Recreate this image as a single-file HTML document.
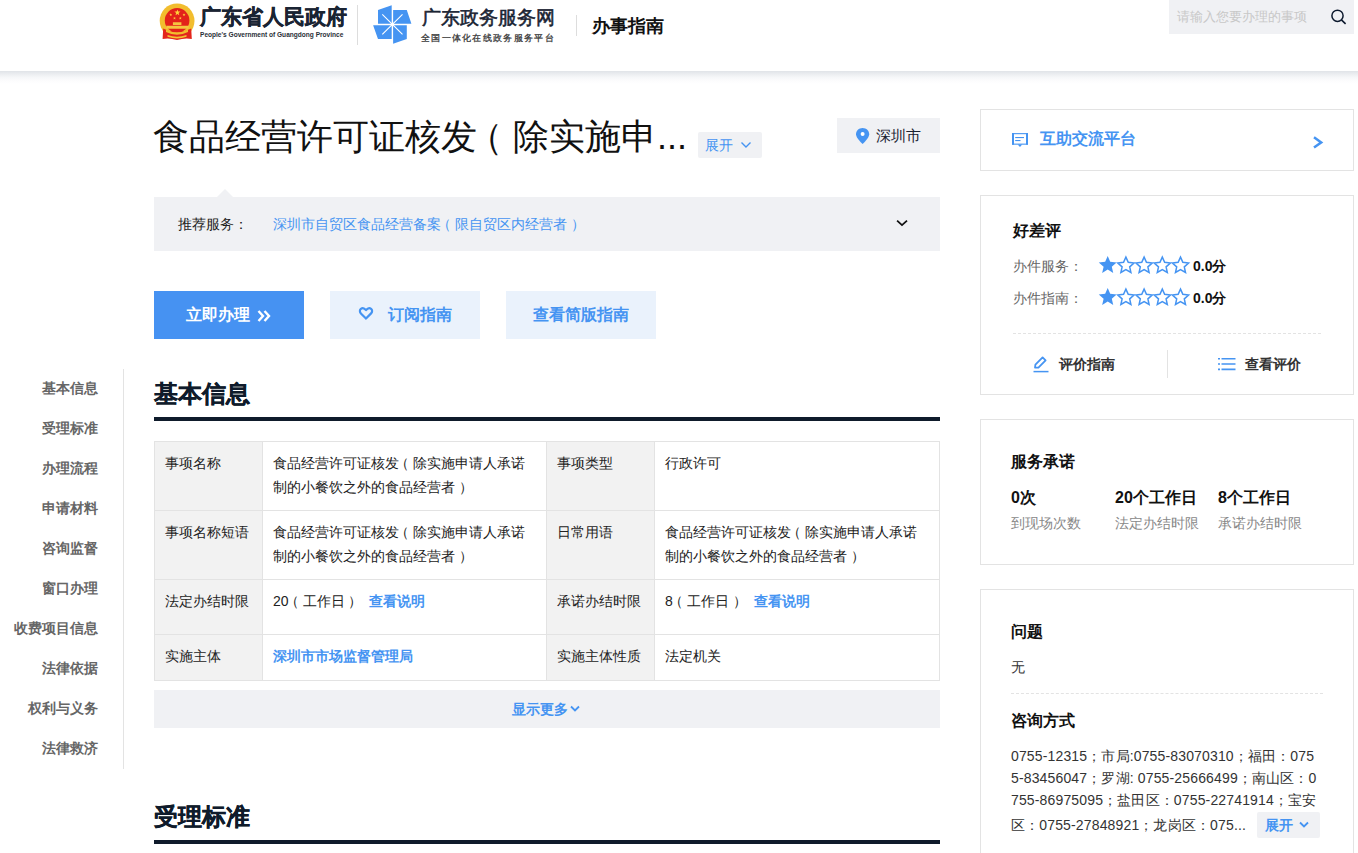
<!DOCTYPE html>
<html><head><meta charset="utf-8">
<style>
*{margin:0;padding:0;box-sizing:border-box}
html,body{width:1358px;height:853px;overflow:hidden;background:#fff}
body{font-family:"Liberation Sans",sans-serif;color:#333;position:relative}
.a{position:absolute}
.hdr{left:0;top:0;width:1358px;height:71px;background:#fff;z-index:2}
.shd{left:0;top:71px;width:1358px;height:13px;background:linear-gradient(to bottom,#e0e3e8 0%,#eceef1 25%,#f6f7f9 50%,#fcfcfd 75%,#fff 100%)}
.lp{position:relative;left:-.28em}.rp{position:relative;left:.28em}
.blue{color:#4594f2}
.gbg{background:#f0f1f4}
.nav div{position:absolute;right:0;width:120px;text-align:right;font-size:14px;font-weight:bold;color:#666;line-height:20px}
.card{position:absolute;left:980px;width:374px;border:1px solid #e3e3e3;background:#fff}
table{border-collapse:collapse;position:absolute;left:154px;top:441px;width:786px;font-size:14px;color:#222}
td{border:1px solid #e3e3e3;vertical-align:top;padding:9px 10px 0 10px;line-height:24px}
td.l{background:#f2f2f2;width:108px}
</style></head><body>
<div class="a hdr">
  <!-- emblem -->
  <svg class="a" style="left:155px;top:0" width="45" height="45" viewBox="0 0 45 45">
    <circle cx="22.1" cy="20.8" r="17.4" fill="#f2bd2e"/>
    <path d="M8.2 28.5 L14 31 L30 31 L36.2 28.5 L36.8 39 Q30 37.6 22 40 Q14 37.6 7.6 39 Z" fill="#e3261c"/>
    <circle cx="22.1" cy="20.4" r="12.3" fill="#e3221a"/>
    <path d="M17.9 22.2 H26.4 V25 H17.9Z M11.3 25.8 H33.6 V28.7 H11.3Z" fill="#f5c640"/>
    <path d="M11 29.5 Q22 35 33 29.5 L33 32 Q22 37.5 11 32Z" fill="#f2bd2e"/>
    <path d="M12.5 35 Q22 38.5 31.5 35 L31.5 36.8 Q22 40.3 12.5 36.8Z" fill="#f2c232"/>
    <path d="M22.40 9.40 L23.16 11.55 L25.44 11.61 L23.64 13.00 L24.28 15.19 L22.40 13.90 L20.52 15.19 L21.16 13.00 L19.36 11.61 L21.64 11.55Z" fill="#ffd43a"/>
    <path d="M15.80 13.30 L16.15 14.31 L17.23 14.34 L16.37 14.99 L16.68 16.01 L15.80 15.40 L14.92 16.01 L15.23 14.99 L14.37 14.34 L15.45 14.31Z" fill="#ffd43a"/>
    <path d="M29.00 13.30 L29.35 14.31 L30.43 14.34 L29.57 14.99 L29.88 16.01 L29.00 15.40 L28.12 16.01 L28.43 14.99 L27.57 14.34 L28.65 14.31Z" fill="#ffd43a"/>
    <path d="M19.50 16.70 L19.85 17.71 L20.93 17.74 L20.07 18.39 L20.38 19.41 L19.50 18.80 L18.62 19.41 L18.93 18.39 L18.07 17.74 L19.15 17.71Z" fill="#ffd43a"/>
    <path d="M25.30 16.70 L25.65 17.71 L26.73 17.74 L25.87 18.39 L26.18 19.41 L25.30 18.80 L24.42 19.41 L24.73 18.39 L23.87 17.74 L24.95 17.71Z" fill="#ffd43a"/>
  </svg>
  <div class="a" style="left:200px;top:3px;font-size:20.6px;font-weight:bold;color:#1a2433;line-height:28px;-webkit-text-stroke:.4px #1a2433">广东省人民政府</div>
  <div class="a" style="left:200px;top:30px;font-size:8px;font-weight:bold;color:#2a2f38;line-height:10px;white-space:nowrap;transform-origin:0 0;transform:scaleX(0.82)">People's Government of Guangdong Province</div>
  <div class="a" style="left:357px;top:5px;width:1px;height:40px;background:#ddd"></div>
  <!-- pinwheel -->
  <svg class="a" style="left:368px;top:2px" width="50" height="46" viewBox="0 0 50 46">
    <g fill="#4594f2">
      <path d="M10 8.1 L23.7 3.2 L23.7 21.8 L10 21.8Z"/>
      <path d="M25.1 8.1 L38.8 8.1 L43.4 21.8 L25.1 21.8Z"/>
      <path d="M5.1 23.2 L23.7 23.2 L23.7 37 L10 37Z"/>
      <path d="M25.1 23.2 L38.8 23.2 L38.8 37 L25.1 41.8Z"/>
    </g>
    <path d="M14.3 12.4 L34.5 32.4 M34.5 12.4 L14.3 32.4" stroke="#fff" stroke-width="1.1"/>
    <circle cx="24.4" cy="22.5" r="1.8" fill="#fff"/>
  </svg>
  <div class="a" style="left:422px;top:5px;font-size:19px;color:#1a2433;font-weight:normal;-webkit-text-stroke:.55px #1a2433;line-height:26px">广东政务服务网</div>
  <div class="a" style="left:421px;top:32px;font-size:9px;color:#333;letter-spacing:1.3px;-webkit-text-stroke:.25px #333;line-height:12px;white-space:nowrap">全国一体化在线政务服务平台</div>
  <div class="a" style="left:576px;top:15px;width:1px;height:21px;background:#ddd"></div>
  <div class="a" style="left:592px;top:13px;font-size:18px;font-weight:bold;color:#111;line-height:26px">办事指南</div>
  <!-- search -->
  <div class="a gbg" style="left:1169px;top:0;width:185px;height:34px"></div>
  <div class="a" style="left:1177px;top:7px;font-size:13px;color:#c8c8c8;line-height:20px">请输入您要办理的事项</div>
  <svg class="a" style="left:1329px;top:8px" width="18" height="18" viewBox="0 0 18 18"><circle cx="8.5" cy="7.8" r="5.6" fill="none" stroke="#0d1a2e" stroke-width="1.5"/><path d="M12.4 11.8 L16.6 15.8" stroke="#0d1a2e" stroke-width="1.6"/></svg>
</div>

<div class="a shd"></div>
<!-- title -->
<div class="a" style="left:153px;top:112px;font-size:36px;color:#111;line-height:50px;white-space:nowrap">食品经营许可证核发<span class="lp">（</span>除实施申...</div>
<div class="a gbg" style="left:698px;top:132px;width:64px;height:26px;border-radius:2px"></div>
<div class="a blue" style="left:705px;top:135px;font-size:14px;line-height:20px">展开</div>
<svg class="a" style="left:740px;top:140px" width="12" height="10" viewBox="0 0 12 10"><path d="M1.5 2.5 L6 7 L10.5 2.5" fill="none" stroke="#4594f2" stroke-width="1.4"/></svg>

<div class="a gbg" style="left:837px;top:118px;width:103px;height:35px"></div>
<svg class="a" style="left:855px;top:127px" width="15" height="18" viewBox="0 0 15 18"><path d="M7.6 1 C3.8 1 1 3.8 1 7.2 C1 11 7.6 17 7.6 17 C7.6 17 14.2 11 14.2 7.2 C14.2 3.8 11.4 1 7.6 1Z" fill="#4594f2"/><circle cx="7.6" cy="7" r="2" fill="#fff"/></svg>
<div class="a" style="left:876px;top:125px;font-size:15px;color:#1a2230;line-height:21px">深圳市</div>

<!-- recommend -->
<div class="a gbg" style="left:154px;top:197px;width:786px;height:54px"></div>
<div class="a" style="left:217px;top:189px;width:0;height:0;border-left:8px solid transparent;border-right:8px solid transparent;border-bottom:8px solid #f0f1f4"></div>
<div class="a" style="left:178px;top:214px;font-size:14px;color:#222;line-height:20px">推荐服务：</div>
<div class="a blue" style="left:273px;top:214px;font-size:14px;line-height:20px">深圳市自贸区食品经营备案<span class="lp">（</span>限自贸区内经营者<span class="rp">）</span></div>
<svg class="a" style="left:896px;top:218px" width="12" height="10" viewBox="0 0 12 10"><path d="M1.1 2.6 L6 7.1 L11 2.6" fill="none" stroke="#111" stroke-width="1.8"/></svg>

<!-- buttons -->
<div class="a" style="left:154px;top:291px;width:150px;height:48px;background:#4692f2"></div>
<div class="a" style="left:186px;top:304px;font-size:16px;font-weight:bold;color:#fff;line-height:22px">立即办理</div>
<svg class="a" style="left:256px;top:309px" width="16" height="14" viewBox="0 0 16 14"><path d="M2.5 2 L7 7 L2.5 12 M8.5 2 L13 7 L8.5 12" fill="none" stroke="#fff" stroke-width="2.4"/></svg>
<div class="a" style="left:330px;top:291px;width:150px;height:48px;background:#eaf2fc"></div>
<svg class="a" style="left:358px;top:306px" width="16" height="15" viewBox="0 0 16 15"><path d="M8 12.6 L2.9 7.4 C1.5 6 1.6 3.8 2.9 2.8 C4.2 1.8 6.3 2 8 4.2 C9.7 2 11.8 1.8 13.1 2.8 C14.4 3.8 14.5 6 13.1 7.4Z" fill="none" stroke="#4594f2" stroke-width="2.2" stroke-linejoin="round"/></svg>
<div class="a blue" style="left:388px;top:304px;font-size:16px;font-weight:bold;line-height:22px">订阅指南</div>
<div class="a" style="left:506px;top:291px;width:150px;height:48px;background:#eaf2fc"></div>
<div class="a blue" style="left:533px;top:304px;font-size:16px;font-weight:bold;line-height:22px">查看简版指南</div>

<!-- left nav -->
<div class="a nav" style="left:0;top:0;width:98px">
  <div style="top:378px">基本信息</div>
  <div style="top:418px">受理标准</div>
  <div style="top:458px">办理流程</div>
  <div style="top:498px">申请材料</div>
  <div style="top:538px">咨询监督</div>
  <div style="top:578px">窗口办理</div>
  <div style="top:618px">收费项目信息</div>
  <div style="top:658px">法律依据</div>
  <div style="top:698px">权利与义务</div>
  <div style="top:738px">法律救济</div>
</div>
<div class="a" style="left:123px;top:369px;width:1px;height:400px;background:#e3e3e3"></div>

<!-- section 1 -->
<div class="a" style="left:154px;top:377px;font-size:24px;font-weight:bold;color:#0f1b2b;line-height:34px;-webkit-text-stroke:.3px #0f1b2b">基本信息</div>
<div class="a" style="left:154px;top:417px;width:786px;height:4px;background:#0f1b2b"></div>

<table>
<tr style="height:69px"><td class="l">事项名称</td><td style="width:284px">食品经营许可证核发<span class="lp">（</span>除实施申请人承诺制的小餐饮之外的食品经营者<span class="rp">）</span></td><td class="l">事项类型</td><td>行政许可</td></tr>
<tr style="height:69px"><td class="l">事项名称短语</td><td>食品经营许可证核发<span class="lp">（</span>除实施申请人承诺制的小餐饮之外的食品经营者<span class="rp">）</span></td><td class="l">日常用语</td><td>食品经营许可证核发<span class="lp">（</span>除实施申请人承诺制的小餐饮之外的食品经营者<span class="rp">）</span></td></tr>
<tr style="height:55px"><td class="l">法定办结时限</td><td>20<span class="lp">（</span>工作日<span class="rp">）</span> <b class="blue" style="margin-left:7px">查看说明</b></td><td class="l">承诺办结时限</td><td>8<span class="lp">（</span>工作日<span class="rp">）</span> <b class="blue" style="margin-left:7px">查看说明</b></td></tr>
<tr style="height:46px"><td class="l">实施主体</td><td><b class="blue">深圳市市场监督管理局</b></td><td class="l">实施主体性质</td><td>法定机关</td></tr>
</table>

<div class="a gbg" style="left:154px;top:690px;width:786px;height:38px"></div>
<div class="a blue" style="left:512px;top:699px;font-size:14px;font-weight:bold;line-height:20px">显示更多</div>
<svg class="a" style="left:569px;top:704px" width="12" height="10" viewBox="0 0 12 10"><path d="M2 2.5 L6 6.5 L10 2.5" fill="none" stroke="#4594f2" stroke-width="1.8"/></svg>

<div class="a" style="left:154px;top:800px;font-size:24px;font-weight:bold;color:#0f1b2b;line-height:34px;-webkit-text-stroke:.3px #0f1b2b">受理标准</div>
<div class="a" style="left:154px;top:840px;width:786px;height:4px;background:#0f1b2b"></div>

<!-- right cards -->
<div class="card" style="top:109px;height:62px"></div>
<svg class="a" style="left:1010px;top:131px" width="20" height="18" viewBox="0 0 20 18"><g fill="#4594f2"><rect x="2" y="2.1" width="2" height="11.6"/><rect x="16" y="2.1" width="2" height="11.6"/><rect x="2" y="2.1" width="16" height="1.1"/><rect x="2" y="12.6" width="16" height="1.1"/><path d="M7.7 13.5 L12.2 13.5 L9.95 15.9Z"/><rect x="5.2" y="6" width="8.8" height="1.1"/><rect x="5.2" y="9" width="5.3" height="1.1"/></g></svg>
<div class="a blue" style="left:1040px;top:128px;font-size:16px;font-weight:bold;line-height:22px">互助交流平台</div>
<svg class="a" style="left:1310px;top:134px" width="16" height="16" viewBox="0 0 16 16"><path d="M4 3.2 L11.2 8.4 L4 13.6" fill="none" stroke="#4594f2" stroke-width="2.5"/></svg>

<div class="card" style="top:195px;height:200px"></div>
<div class="a" style="left:1013px;top:220px;font-size:16px;font-weight:bold;color:#111;line-height:22px">好差评</div>
<div class="a" style="left:1013px;top:256px;font-size:14px;color:#666;line-height:20px">办件服务：</div>
<div class="a" style="left:1013px;top:288px;font-size:14px;color:#666;line-height:20px">办件指南：</div>
<svg class="a" style="left:1098px;top:255px" width="96" height="20" viewBox="0 0 96 20"><path d="M9.70 0.90 L12.23 6.82 L18.64 7.40 L13.79 11.63 L15.23 17.90 L9.70 14.60 L4.17 17.90 L5.61 11.63 L0.76 7.40 L7.17 6.82Z" fill="#4594f2"/><path d="M27.90 2.10 L30.25 7.36 L35.98 7.97 L31.70 11.84 L32.90 17.48 L27.90 14.60 L22.90 17.48 L24.10 11.84 L19.82 7.97 L25.55 7.36Z" fill="none" stroke="#4594f2" stroke-width="1.5"/><path d="M46.10 2.10 L48.45 7.36 L54.18 7.97 L49.90 11.84 L51.10 17.48 L46.10 14.60 L41.10 17.48 L42.30 11.84 L38.02 7.97 L43.75 7.36Z" fill="none" stroke="#4594f2" stroke-width="1.5"/><path d="M64.30 2.10 L66.65 7.36 L72.38 7.97 L68.10 11.84 L69.30 17.48 L64.30 14.60 L59.30 17.48 L60.50 11.84 L56.22 7.97 L61.95 7.36Z" fill="none" stroke="#4594f2" stroke-width="1.5"/><path d="M82.50 2.10 L84.85 7.36 L90.58 7.97 L86.30 11.84 L87.50 17.48 L82.50 14.60 L77.50 17.48 L78.70 11.84 L74.42 7.97 L80.15 7.36Z" fill="none" stroke="#4594f2" stroke-width="1.5"/></svg>
<svg class="a" style="left:1098px;top:287px" width="96" height="20" viewBox="0 0 96 20"><path d="M9.70 0.90 L12.23 6.82 L18.64 7.40 L13.79 11.63 L15.23 17.90 L9.70 14.60 L4.17 17.90 L5.61 11.63 L0.76 7.40 L7.17 6.82Z" fill="#4594f2"/><path d="M27.90 2.10 L30.25 7.36 L35.98 7.97 L31.70 11.84 L32.90 17.48 L27.90 14.60 L22.90 17.48 L24.10 11.84 L19.82 7.97 L25.55 7.36Z" fill="none" stroke="#4594f2" stroke-width="1.5"/><path d="M46.10 2.10 L48.45 7.36 L54.18 7.97 L49.90 11.84 L51.10 17.48 L46.10 14.60 L41.10 17.48 L42.30 11.84 L38.02 7.97 L43.75 7.36Z" fill="none" stroke="#4594f2" stroke-width="1.5"/><path d="M64.30 2.10 L66.65 7.36 L72.38 7.97 L68.10 11.84 L69.30 17.48 L64.30 14.60 L59.30 17.48 L60.50 11.84 L56.22 7.97 L61.95 7.36Z" fill="none" stroke="#4594f2" stroke-width="1.5"/><path d="M82.50 2.10 L84.85 7.36 L90.58 7.97 L86.30 11.84 L87.50 17.48 L82.50 14.60 L77.50 17.48 L78.70 11.84 L74.42 7.97 L80.15 7.36Z" fill="none" stroke="#4594f2" stroke-width="1.5"/></svg>
<div class="a" style="left:1193px;top:256px;font-size:14px;font-weight:bold;color:#111;line-height:20px">0.0分</div>
<div class="a" style="left:1193px;top:288px;font-size:14px;font-weight:bold;color:#111;line-height:20px">0.0分</div>
<div class="a" style="left:1013px;top:333px;width:308px;border-top:1px dashed #e3e3e3"></div>
<div class="a" style="left:1167px;top:350px;width:1px;height:28px;background:#e3e3e3"></div>
<svg class="a" style="left:1032px;top:355px" width="18" height="18" viewBox="0 0 18 18"><path d="M3 12.5 L3.4 9.6 L10.6 2.4 L13.6 5.4 L6.4 12.6 Z" fill="none" stroke="#4594f2" stroke-width="1.8" stroke-linejoin="round"/><path d="M1.5 16.6 H16.5" stroke="#4594f2" stroke-width="1.5"/></svg>
<div class="a" style="left:1059px;top:354px;font-size:14px;font-weight:bold;color:#333;line-height:20px">评价指南</div>
<svg class="a" style="left:1217px;top:356px" width="20" height="16" viewBox="0 0 20 16"><path d="M1 2.8 H3 M4.5 2.8 H18.5 M1 8 H3 M4.5 8 H18.5 M1 13.4 H3 M4.5 13.4 H18.5" stroke="#4594f2" stroke-width="1.6"/></svg>
<div class="a" style="left:1245px;top:354px;font-size:14px;font-weight:bold;color:#333;line-height:20px">查看评价</div>

<div class="card" style="top:419px;height:146px"></div>
<div class="a" style="left:1011px;top:451px;font-size:16px;font-weight:bold;color:#111;line-height:22px">服务承诺</div>
<div class="a" style="left:1011px;top:487px;font-size:16px;font-weight:bold;color:#111;line-height:22px">0次</div>
<div class="a" style="left:1115px;top:487px;font-size:16px;font-weight:bold;color:#111;line-height:22px">20个工作日</div>
<div class="a" style="left:1218px;top:487px;font-size:16px;font-weight:bold;color:#111;line-height:22px">8个工作日</div>
<div class="a" style="left:1011px;top:513px;font-size:14px;color:#888;line-height:20px">到现场次数</div>
<div class="a" style="left:1115px;top:513px;font-size:14px;color:#888;line-height:20px">法定办结时限</div>
<div class="a" style="left:1218px;top:513px;font-size:14px;color:#888;line-height:20px">承诺办结时限</div>

<div class="card" style="top:589px;height:280px"></div>
<div class="a" style="left:1011px;top:621px;font-size:16px;font-weight:bold;color:#111;line-height:22px">问题</div>
<div class="a" style="left:1011px;top:657px;font-size:14px;color:#333;line-height:20px">无</div>
<div class="a" style="left:1011px;top:693px;width:312px;border-top:1px dashed #e3e3e3"></div>
<div class="a" style="left:1011px;top:710px;font-size:16px;font-weight:bold;color:#111;line-height:22px">咨询方式</div>
<div class="a" style="left:1011px;top:745px;font-size:14px;color:#333;line-height:22px;white-space:nowrap;letter-spacing:.15px">0755-12315；市局:0755-83070310；福田：075<br>5-83456047；罗湖: 0755-25666499；南山区：0<br>755-86975095；盐田区：0755-22741914；宝安</div>
<div class="a" style="left:1011px;top:814px;font-size:14px;color:#333;line-height:22px;white-space:nowrap;letter-spacing:.15px">区：0755-27848921；龙岗区：075...</div>
<div class="a gbg" style="left:1257px;top:812px;width:63px;height:26px;border-radius:2px"></div>
<div class="a blue" style="left:1265px;top:815px;font-size:14px;font-weight:bold;line-height:20px">展开</div>
<svg class="a" style="left:1298px;top:820px" width="12" height="10" viewBox="0 0 12 10"><path d="M2 2.5 L6 6.5 L10 2.5" fill="none" stroke="#4594f2" stroke-width="1.8"/></svg>
</body></html>
